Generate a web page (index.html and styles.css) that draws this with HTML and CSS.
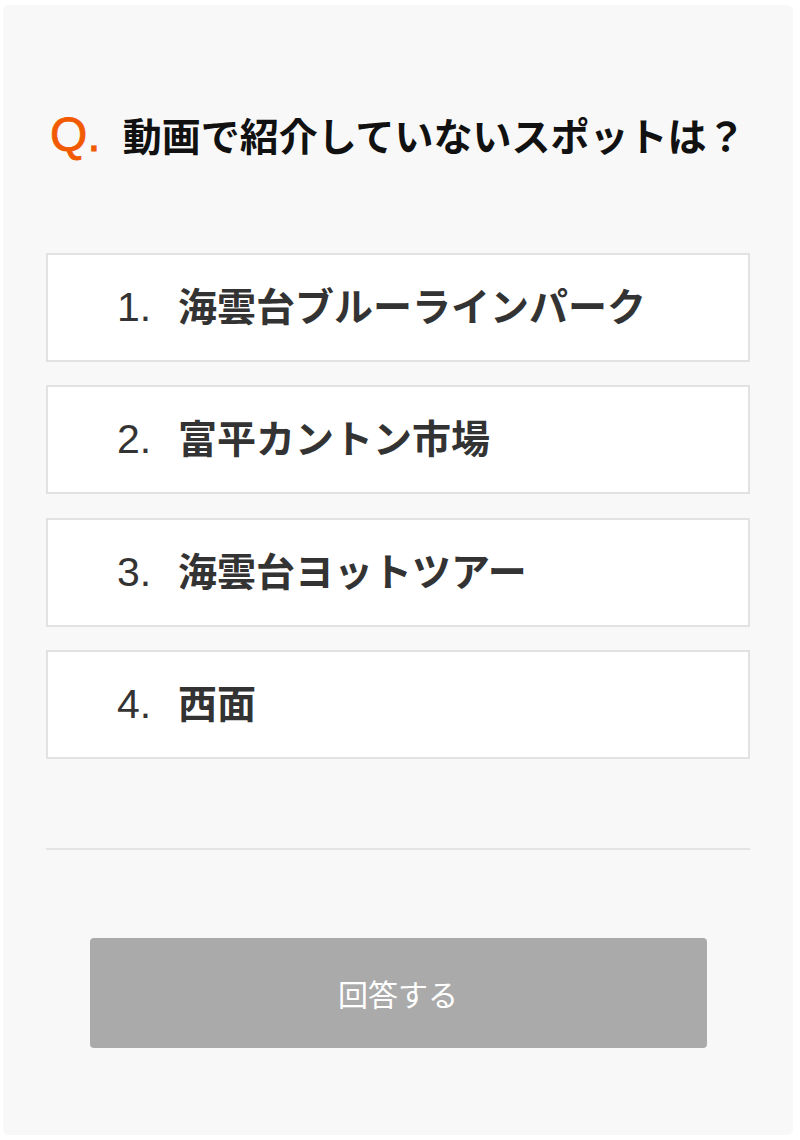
FILE: index.html
```html
<!DOCTYPE html>
<html lang="ja">
  <head>
    <meta charset="UTF-8" />
    <meta name="viewport" content="width=device-width, initial-scale=1.0" />
    <title>クイズ</title>
    <link rel="stylesheet" href="styles.css">
  </head>
  <body>
    <!-- Quiz panel -->
    <div class="quiz">
      <h2 class="question">
        <span class="q-mark">Q.</span>
        <span class="q-text">動画で紹介していないスポットは？</span>
      </h2>

      <ul class="choices">
        <li class="choice"><span class="num">1.</span><span class="label">海雲台ブルーラインパーク</span></li>
        <li class="choice"><span class="num">2.</span><span class="label">富平カントン市場</span></li>
        <li class="choice"><span class="num">3.</span><span class="label">海雲台ヨットツアー</span></li>
        <li class="choice"><span class="num">4.</span><span class="label">西面</span></li>
      </ul>

      <hr class="divider" />

      <div class="actions">
        <button class="answer-button" disabled>回答する</button>
      </div>
    </div>
  </body>
</html>
```

FILE: styles.css
```css
body {
  font-family: "Liberation Sans", "Noto Sans CJK JP", sans-serif;
  margin: 0;
  padding: 0;
  background-color: #fff;
}
.quiz {
  background-color: #f8f8f8;
  margin: 5px 7px 5px 3px;
  padding: 100px 43px 87px 43px;
  border-radius: 6px;
  box-sizing: border-box;
  height: 1130px;
}
.question {
  display: flex;
  align-items: baseline;
  height: 60px;
  margin: 0 0 88px 0;
  padding-left: 4px;
  line-height: 60px;
}
.q-mark {
  color: #f15a00;
  font-size: 48px;
  font-weight: normal;
  margin-right: 22px;
  -webkit-text-stroke: 0.8px #f15a00;
}
.q-text {
  color: #111;
  font-size: 39px;
  font-weight: bold;
}
.choices {
  list-style: none;
  margin: 0;
  padding: 0;
  display: flex;
  flex-direction: column;
  gap: 23.3px;
}
.choice {
  height: 109px;
  line-height: 105px;
  box-sizing: border-box;
  background-color: #fff;
  border: 2px solid #e2e2e2;
  padding-left: 69px;
  color: #333;
  font-size: 39px;
  white-space: nowrap;
}
.choice .num {
  display: inline-block;
  width: 61px;
  font-size: 41px;
  font-weight: normal;
}
.choice .label {
  font-weight: bold;
}
.divider {
  border: none;
  border-top: 2px solid #e4e4e4;
  margin: 89px 0 88px 0;
}
.actions {
  display: flex;
  justify-content: center;
}
.answer-button {
  width: 617px;
  height: 110px;
  background-color: #aaa;
  color: #fff;
  border: none;
  border-radius: 4px;
  font-family: inherit;
  font-size: 30px;
  cursor: pointer;
}
```
